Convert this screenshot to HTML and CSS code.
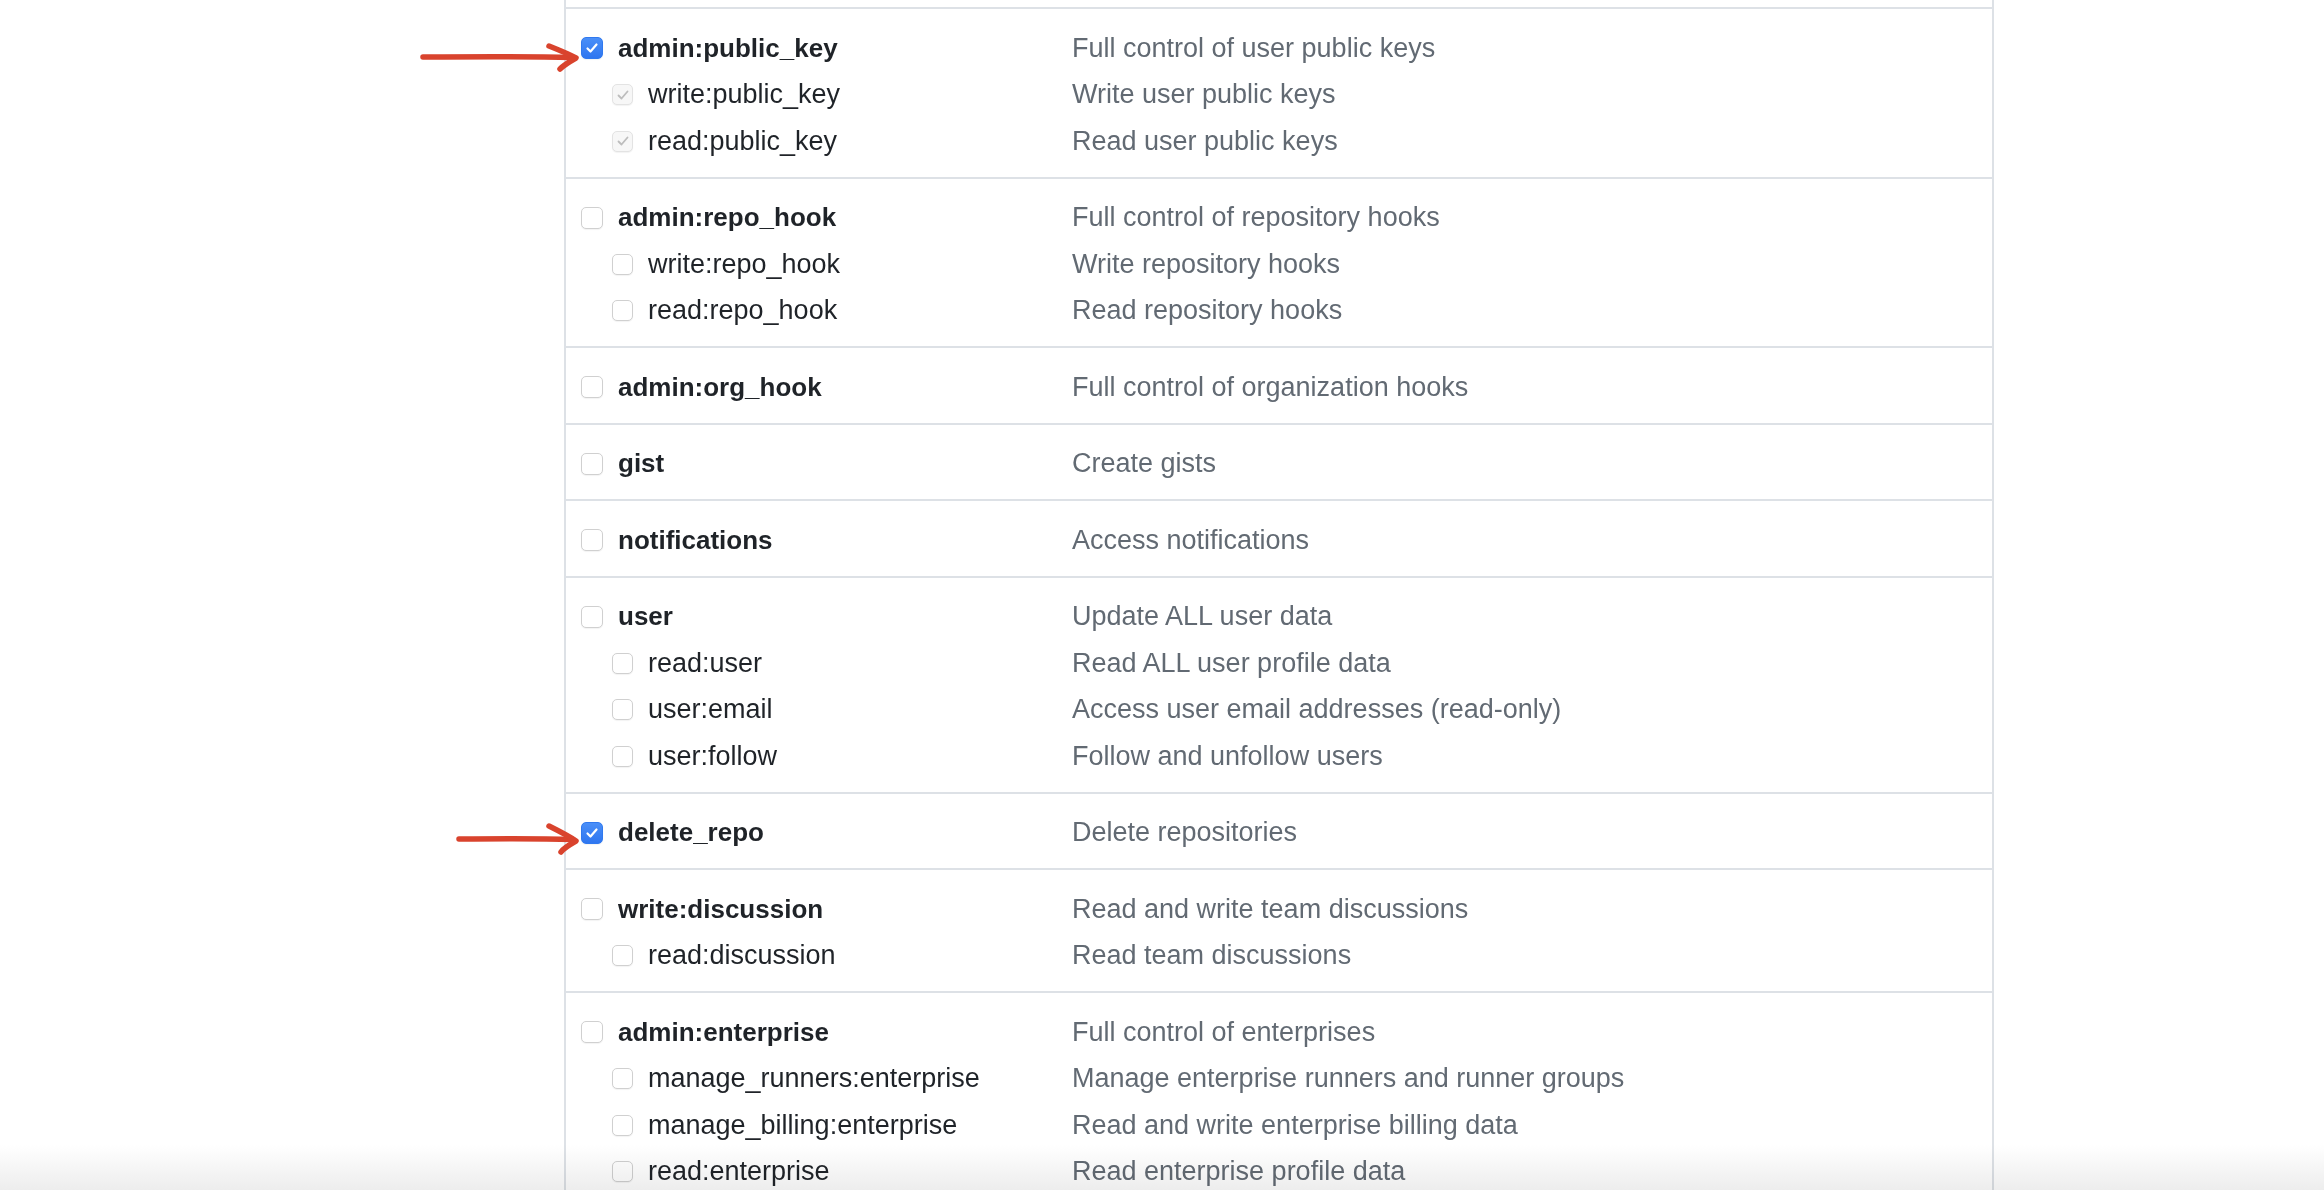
FILE: index.html
```html
<!DOCTYPE html>
<html>
<head>
<meta charset="utf-8">
<link rel="stylesheet" href="styles.css">
</head>
<body>
<div class="scopes">
  <div class="tail"></div>

  <div class="group">
    <div class="row"><span class="name"><span class="cb checked"><svg viewBox="0 0 16 16"><path d="M3.5 8.5l3 3 6-7"/></svg></span><b>admin:public_key</b></span><span class="desc">Full control of user public keys</span></div>
    <div class="row sub"><span class="name"><span class="cb dis"><svg viewBox="0 0 16 16"><path d="M3.5 8.5l3 3 6-7"/></svg></span>write:public_key</span><span class="desc">Write user public keys</span></div>
    <div class="row sub"><span class="name"><span class="cb dis"><svg viewBox="0 0 16 16"><path d="M3.5 8.5l3 3 6-7"/></svg></span>read:public_key</span><span class="desc">Read user public keys</span></div>
  </div>

  <div class="group">
    <div class="row"><span class="name"><span class="cb"></span><b>admin:repo_hook</b></span><span class="desc">Full control of repository hooks</span></div>
    <div class="row sub"><span class="name"><span class="cb"></span>write:repo_hook</span><span class="desc">Write repository hooks</span></div>
    <div class="row sub"><span class="name"><span class="cb"></span>read:repo_hook</span><span class="desc">Read repository hooks</span></div>
  </div>

  <div class="group">
    <div class="row"><span class="name"><span class="cb"></span><b>admin:org_hook</b></span><span class="desc">Full control of organization hooks</span></div>
  </div>

  <div class="group">
    <div class="row"><span class="name"><span class="cb"></span><b>gist</b></span><span class="desc">Create gists</span></div>
  </div>

  <div class="group">
    <div class="row"><span class="name"><span class="cb"></span><b>notifications</b></span><span class="desc">Access notifications</span></div>
  </div>

  <div class="group">
    <div class="row"><span class="name"><span class="cb"></span><b>user</b></span><span class="desc">Update ALL user data</span></div>
    <div class="row sub"><span class="name"><span class="cb"></span>read:user</span><span class="desc">Read ALL user profile data</span></div>
    <div class="row sub"><span class="name"><span class="cb"></span>user:email</span><span class="desc">Access user email addresses (read-only)</span></div>
    <div class="row sub"><span class="name"><span class="cb"></span>user:follow</span><span class="desc">Follow and unfollow users</span></div>
  </div>

  <div class="group">
    <div class="row"><span class="name"><span class="cb checked"><svg viewBox="0 0 16 16"><path d="M3.5 8.5l3 3 6-7"/></svg></span><b>delete_repo</b></span><span class="desc">Delete repositories</span></div>
  </div>

  <div class="group">
    <div class="row"><span class="name"><span class="cb"></span><b>write:discussion</b></span><span class="desc">Read and write team discussions</span></div>
    <div class="row sub"><span class="name"><span class="cb"></span>read:discussion</span><span class="desc">Read team discussions</span></div>
  </div>

  <div class="group">
    <div class="row"><span class="name"><span class="cb"></span><b>admin:enterprise</b></span><span class="desc">Full control of enterprises</span></div>
    <div class="row sub"><span class="name"><span class="cb"></span>manage_runners:enterprise</span><span class="desc">Manage enterprise runners and runner groups</span></div>
    <div class="row sub"><span class="name"><span class="cb"></span>manage_billing:enterprise</span><span class="desc">Read and write enterprise billing data</span></div>
    <div class="row sub"><span class="name"><span class="cb"></span>read:enterprise</span><span class="desc">Read enterprise profile data</span></div>
  </div>
</div>

<svg class="arrow arrow-1" width="180" height="40" viewBox="0 0 180 40">
  <path d="M4 19 C60 18.5 120 18.5 154 19.5"/>
  <path d="M130 8 C140 12 150 16 157 20 C150 24 144 28 141 31"/>
</svg>
<svg class="arrow arrow-2" width="150" height="40" viewBox="0 0 150 40">
  <path d="M4 21 C50 20.5 90 20.5 118 21.5"/>
  <path d="M94 8 C104 13 114 18 121 23 C114 27 108 31 106 34"/>
</svg>

<div class="fade"></div>
</body>
</html>
```

FILE: styles.css
```css
html, body {
  margin: 0;
  padding: 0;
  background: #ffffff;
  overflow: hidden;
}

body {
  font-family: "Liberation Sans", Arial, Helvetica, sans-serif;
  color: #1f2328;
  height: 1190px;
  position: relative;
}

.scopes {
  margin-left: 564px;
  width: 1426px;
  border-left: 2px solid #dde1e6;
  border-right: 2px solid #dde1e6;
  min-height: 1300px;
}

.tail {
  height: 7px;
}

.group {
  border-top: 2px solid #dde1e6;
  padding: 16px 0 12px 15px;
}

.row {
  display: grid;
  grid-template-columns: 491px 1fr;
  align-items: center;
  height: 46.5px;
}

.name {
  display: flex;
  align-items: center;
  font-size: 27px;
  white-space: nowrap;
}

.name b {
  font-size: 26px;
  font-weight: 700;
  color: #1f2328;
}

.sub .name {
  padding-left: 31px;
}

.desc {
  font-size: 27px;
  color: #626a73;
  white-space: nowrap;
}

.cb {
  box-sizing: border-box;
  width: 22px;
  height: 22px;
  border: 1.5px solid #d0d0d0;
  border-radius: 5px;
  background: #ffffff;
  margin-right: 15px;
  flex: none;
  display: flex;
  align-items: center;
  justify-content: center;
  box-shadow: 0 1px 1px rgba(0,0,0,0.05);
}

.sub .cb {
  width: 21px;
  height: 21px;
  margin-right: 15px;
}

.cb svg {
  width: 16px;
  height: 16px;
  fill: none;
  stroke-width: 2.2;
  stroke-linecap: round;
  stroke-linejoin: round;
}

.cb.checked {
  background: linear-gradient(#4a8ff8, #2f76f0);
  border-color: #3079ef;
}

.cb.checked svg {
  stroke: #ffffff;
}

.cb.dis {
  background: #f7f7f7;
  border-color: #e3e3e3;
}

.cb.dis svg {
  stroke: #bdbdbd;
  stroke-width: 1.8;
}

.arrow {
  position: absolute;
  fill: none;
  stroke: #d9432d;
  stroke-width: 5.5;
  stroke-linecap: round;
  stroke-linejoin: round;
}

.arrow-1 {
  left: 419px;
  top: 38px;
}

.arrow-2 {
  left: 455px;
  top: 818px;
}

.fade {
  position: absolute;
  left: 0;
  right: 0;
  bottom: 0;
  height: 45px;
  background: linear-gradient(#ffffff, #ededed);
  mix-blend-mode: multiply;
  pointer-events: none;
}
```
